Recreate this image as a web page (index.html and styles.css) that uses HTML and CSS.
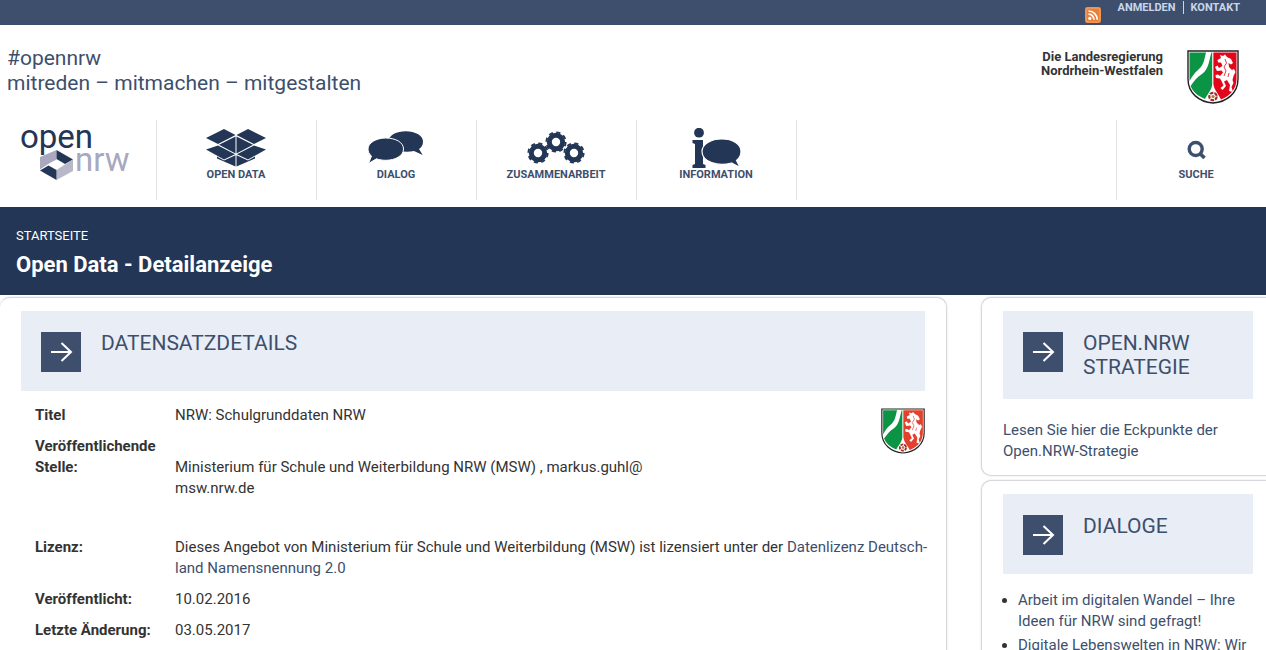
FILE: index.html
```html
<!DOCTYPE html>
<html lang="de">
<head>
<meta charset="utf-8">
<title>Open Data - Detailanzeige</title>
<link rel="stylesheet" href="styles.css">
</head>
<body>
<svg class="defs" aria-hidden="true">
  <symbol id="coat" viewBox="0 0 52 54">
    <path d="M1 1H51V29C51 43 40 52 26 53C12 52 1 43 1 29Z" fill="#fff" stroke="#222" stroke-width="1.4"/>
    <path d="M2.5 2.5H19C17 10 17 15 11 20C7 23 5 27 2.5 31Z" fill="#0b9444"/>
    <path d="M25.2 2.5V34C25 39 22 42 18 49C11 46 6 42 3.6 36C7 31 10 27 15 24C22 19 22 10 24.5 2.5Z" fill="#0b9444"/>
    <path class="coat-red" d="M26.4 2.5H49.5V29C49.5 39 43 46 34 49.5C31 43 27 40 26.4 34Z"/>
    <path d="M33 5L36 6L38 4.500L40 7L44 9L46 13L44 14.500L41.500 13L42 17L45 20L47 19L48.500 22L46.500 26L45.500 30L46.500 33L44.500 37L46 42L42 41L43 35L40 30L37 31.500L39 36L35.500 40L33.500 38L36.500 35.500L34.500 31L33 28.500L29 28L28.500 25L31 24.500L33 26L36 22.500L34.500 20.500L30 21L28 17L30.500 15.500L32 18L35.500 16L34 12.500L31 12.500L30.500 10L34 8Z" fill="#fff"/>
    <path class="coat-line" d="M38 9L39.500 13L37 17L39 21L37 26M42 23L41 27" fill="none" stroke-width="0.8"/>
    <circle cx="26" cy="46.500" r="3.700" fill="#fff" stroke="#a52a2a" stroke-width="2.200" stroke-dasharray="3.600 1"/>
    <circle cx="26" cy="46.500" r="1.600" fill="#b07a2a"/>
  </symbol>
  <symbol id="arrow" viewBox="0 0 40 40">
    <path d="M10 20H30M20.500 11L30 20L20.500 29" fill="none" stroke="#fff" stroke-width="2"/>
  </symbol>
  <symbol id="gear" viewBox="-12 -12 24 24">
    <circle r="6.700" fill="none" stroke="#233655" stroke-width="5"/>
    <circle r="9.700" fill="none" stroke="#233655" stroke-width="1.800" stroke-dasharray="4.200 3.418"/>
  </symbol>
</svg>

<div class="topbar">
  <a class="rss" href="#rss" aria-label="RSS">
    <svg viewBox="0 0 16 16"><rect width="16" height="16" rx="2" fill="#e8803a"/><rect x="1" y="1" width="14" height="14" rx="2" fill="none" stroke="#f3a970"/><circle cx="4.800" cy="11.400" r="1.600" fill="#fff"/><path d="M3.500 7.200A5.400 5.400 0 0 1 9 12.800M3.500 4A8.700 8.700 0 0 1 12.300 12.800" fill="none" stroke="#fff" stroke-width="1.700"/></svg>
  </a>
  <nav class="meta"><a href="#login">ANMELDEN</a><a href="#kontakt">KONTAKT</a></nav>
</div>

<header class="header">
  <p class="claim">#opennrw<br>mitreden – mitmachen – mitgestalten</p>
  <div class="state">
    <p class="state-name">Die Landesregierung<br>Nordrhein-Westfalen</p>
    <svg class="coat coat-large" role="img" aria-label="Wappen Nordrhein-Westfalen"><use href="#coat"/></svg>
  </div>
</header>

<nav class="mainnav">
  <a class="logo" href="#home">
    <svg viewBox="0 0 116 60" role="img" aria-label="open nrw">
      <text class="logo-open" x="0" y="28">open</text>
      <text class="logo-nrw" x="55" y="51">nrw</text>
      <path d="M20 37L36.500 30V39.500L29 43.500L20 49.500Z" fill="#a9a8bf"/>
      <path d="M36.500 30L53 39.500L45 44L36.500 39Z" fill="#233655"/>
      <path d="M53 39.500V51L36.500 60V50L45 44.500Z" fill="#b9b8ca"/>
      <path d="M20 50.500L28.500 45.500L36.500 50V60Z" fill="#233655"/>
    </svg>
  </a>
  <a class="item" href="#opendata">
    <svg viewBox="0 0 60 40" fill="#233655">
      <path d="M0 10L18 1L29.500 7L12 16ZM60 10L42 1L30.500 7L48 16Z"/>
      <path d="M13 16.800L29.500 8.400V25.400ZM47 16.800L30.500 8.400V25.400Z"/>
      <path d="M12 17.500L29 26.200L18 31.500L0 21.500ZM48 17.500L31 26.200L42 31.500L60 21.500Z"/>
      <path d="M11 28.500L18 32.500L29.500 27.200V38.500L11 30.500ZM49 28.500L42 32.500L30.500 27.200V38.500L49 30.500Z"/>
    </svg>
    <span>OPEN DATA</span>
  </a>
  <a class="item" href="#dialog">
    <svg viewBox="0 0 60 40" fill="#233655">
      <path d="M39.700 3.300C49 3.300 57 7.500 57 13.500C57 17 55.500 19.500 53 21L56.700 27L48 23C35 26 22 20 22.500 13C23 7 31 3.300 39.700 3.300Z"/>
      <path d="M19.700 10C30 10 37.500 14.500 37.500 21C37.500 28 29 32.300 19.700 32.300C17 32.300 13 31.800 10.500 30.800L2.500 35.500L5.500 28C3 26 2 23.500 2 21C2 15 10 10 19.700 10Z" stroke="#fff" stroke-width="1"/>
    </svg>
    <span>DIALOG</span>
  </a>
  <a class="item" href="#zusammenarbeit">
    <svg viewBox="0 0 60 40"><use href="#gear" x="0" y="13" width="24" height="24"/><use href="#gear" x="18" y="2" width="24" height="24"/><use href="#gear" x="36" y="13" width="24" height="24"/></svg>
    <span>ZUSAMMENARBEIT</span>
  </a>
  <a class="item" href="#information">
    <svg viewBox="0 0 60 40" fill="#233655">
      <circle cx="13" cy="4.700" r="4.900"/>
      <path d="M6.500 12H17V36L19.500 37V40H6.500V37L9 36V16L6.500 15Z"/>
      <path d="M35.700 11C47 11 55 16 55 23.500C55 27.500 53 30.500 50.500 32.500L54 39.500L45.500 35C32 39 16 34 16 23.500C16 16 25 11 35.700 11Z" stroke="#fff" stroke-width="1.200"/>
    </svg>
    <span>INFORMATION</span>
  </a>
  <a class="item search" href="#suche">
    <svg viewBox="0 0 60 40" fill="none" stroke="#3d4f6d"><circle cx="29.700" cy="21" r="6.500" stroke-width="3.400"/><path d="M34.500 26L38.500 30" stroke-width="3.800"/></svg>
    <span>SUCHE</span>
  </a>
</nav>

<div class="banner">
  <a class="crumb" href="#start">STARTSEITE</a>
  <h1>Open Data - Detailanzeige</h1>
</div>

<div class="columns">
  <main class="panel panel-main">
    <div class="box-head">
      <svg class="arrow"><use href="#arrow"/></svg>
      <h2>DATENSATZDETAILS</h2>
    </div>
    <svg class="coat coat-small" role="img" aria-label="Wappen Nordrhein-Westfalen"><use href="#coat"/></svg>
    <dl class="details">
      <div class="row"><dt>Titel</dt><dd>NRW: Schulgrunddaten NRW</dd></div>
      <div class="row row-publisher"><dt>Veröffentlichende Stelle:</dt><dd>Ministerium für Schule und Weiterbildung NRW (MSW) , markus.guhl@<br>msw.nrw.de</dd></div>
      <div class="row row-license"><dt>Lizenz:</dt><dd>Dieses Angebot von Ministerium für Schule und Weiterbildung (MSW) ist lizensiert unter der <a href="#lizenz">Datenlizenz Deutsch-<br>land Namensnennung 2.0</a></dd></div>
      <div class="row"><dt>Veröffentlicht:</dt><dd>10.02.2016</dd></div>
      <div class="row"><dt>Letzte Änderung:</dt><dd>03.05.2017</dd></div>
    </dl>
  </main>
  <aside class="sidebar">
    <section class="panel panel-side">
      <div class="box-head">
        <svg class="arrow"><use href="#arrow"/></svg>
        <h2>OPEN.NRW STRATEGIE</h2>
      </div>
      <p class="teaser"><a href="#strategie">Lesen Sie hier die Eckpunkte der Open.NRW-Strategie</a></p>
    </section>
    <section class="panel panel-side">
      <div class="box-head">
        <svg class="arrow"><use href="#arrow"/></svg>
        <h2>DIALOGE</h2>
      </div>
      <ul class="links">
        <li><a href="#wandel">Arbeit im digitalen Wandel – Ihre Ideen für NRW sind gefragt!</a></li>
        <li><a href="#lebenswelten">Digitale Lebenswelten in NRW: Wir</a></li>
      </ul>
    </section>
  </aside>
</div>
</body>
</html>
```
FILE: styles.css
```css
* { box-sizing: border-box; }
html { height: 100%; overflow: hidden; }
body {
  margin: 0;
  background: #fff;
  color: #333;
  font: 15px/21px Roboto, "Liberation Sans", sans-serif;
}
a { color: #3d4f6d; text-decoration: none; }
p, h1, h2, dl, dd, ul { margin: 0; padding: 0; }
.defs { display: none; }

.topbar {
  display: flex;
  justify-content: flex-end;
  gap: 17px;
  height: 25px;
  padding-right: 26px;
  background: #3d4f6d;
}
.rss { padding-top: 7px; }
.rss svg { display: block; width: 16px; height: 16px; }
.meta { font-size: 11px; font-weight: 700; line-height: 15px; }
.meta a { color: #c9d6ea; }
.meta a + a { margin-left: 7px; padding-left: 7px; border-left: 1px solid #c9d6ea; }

.header {
  display: flex;
  justify-content: space-between;
  padding: 21px 27px 0 7px;
  height: 95px;
}
.claim { color: #3d4f6d; font-size: 21px; line-height: 25px; }
.state { display: flex; gap: 24px; padding-top: 4px; }
.state-name { font-size: 13px; font-weight: 700; line-height: 14px; text-align: right; }
.coat { --coat-red: #e2061a; display: block; }
.coat-large { width: 52px; height: 54px; }
.coat-red { fill: var(--coat-red); }
.coat-line { stroke: var(--coat-red); }
.coat-small { --coat-red: #e2412e; }

.mainnav { display: flex; height: 80px; margin-bottom: 7px; }
.logo { width: 157px; border-right: 1px solid #e2e2e6; padding-left: 20px; }
.logo svg { display: block; width: 116px; height: 60px; overflow: visible; }
.logo-open { font: 33px Roboto, sans-serif; fill: #233655; }
.logo-nrw { font: 33px Roboto, sans-serif; fill: #a9a8bf; }
.item {
  width: 160px;
  padding: 8px 1px 0 0;
  border-right: 1px solid #e2e2e6;
  font-size: 11px;
  font-weight: 700;
  line-height: 14px;
  text-align: center;
}
.item svg { display: block; width: 60px; height: 40px; margin: 0 auto; }
.search { width: 150px; margin-left: auto; padding-left: 10px; border-right: 0; border-left: 1px solid #e2e2e6; }

.banner { padding: 18px 16px 16px; background: #233655; color: #fff; }
.crumb { display: block; color: #fff; font-size: 13px; line-height: 21px; }
.banner h1 { padding-top: 5px; font-size: 22px; line-height: 28px; }

.columns { display: flex; gap: 34px; padding-top: 2px; }
.panel {
  border: 1px solid #d8d8dc;
  border-radius: 10px;
  background: #fff;
  box-shadow: 0 0 2px #dcdce0;
}
.panel-main { flex: 1; min-width: 0; padding: 13px 21px 0; border-left: 0; }
.sidebar { display: flex; flex: none; flex-direction: column; gap: 4px; width: 285px; }
.panel-side { padding: 13px 13px 13px 21px; border-right: 0; border-radius: 10px 0 0 10px; }
.box-head { display: flex; gap: 20px; min-height: 80px; padding: 20px; background: #e9edf5; }
.arrow { flex: none; width: 40px; height: 40px; margin: 1px 0 -1px; background: #3d4f6d; }
.box-head h2 { color: #3d4f6d; font-size: 21px; font-weight: 400; line-height: 24px; }

.details { padding: 14px 0 0 14px; }
.coat-small { float: right; width: 44px; height: 46px; margin-top: 17px; }
.row { display: flex; margin-bottom: 10px; }
.row dt { flex: none; width: 140px; padding-right: 14px; font-weight: 700; }
.row-publisher { padding-bottom: 28px; }
.row-publisher dd { padding-top: 21px; }
.row-license dd { white-space: nowrap; }
.teaser { padding-top: 21px; }
.links { padding: 16px 0 0 15px; }
.links li { margin-bottom: 3px; }
```
